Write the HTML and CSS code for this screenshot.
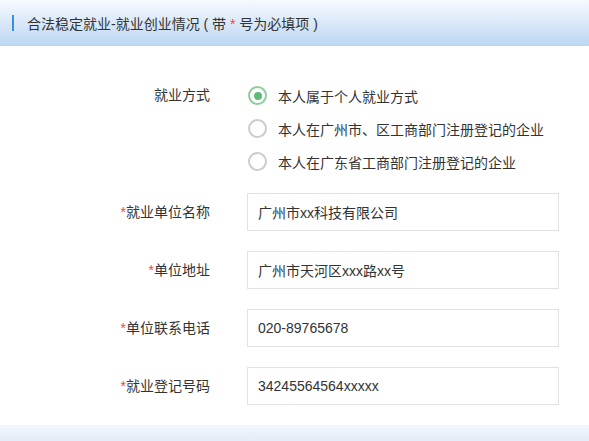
FILE: index.html
```html
<!DOCTYPE html>
<html lang="zh-CN">
<head>
<meta charset="utf-8">
<title>就业创业情况</title>
<link rel="stylesheet" href="styles.css">
</head>
<body>
<div class="panel">
  <div class="panel-head"><span class="bar"></span><span class="title">合法稳定就业-就业创业情况 ( 带 <span class="req">*</span> 号为必填项 )</span></div>
  <form class="form">
    <div class="row choice-row">
      <div class="label">就业方式</div>
      <div class="options">
        <label class="option"><span class="radio checked"></span>本人属于个人就业方式</label>
        <label class="option"><span class="radio"></span>本人在广州市、区工商部门注册登记的企业</label>
        <label class="option"><span class="radio"></span>本人在广东省工商部门注册登记的企业</label>
      </div>
    </div>
    <div class="row field">
      <div class="label"><span class="req">*</span>就业单位名称</div>
      <input class="input" type="text" value="广州市xx科技有限公司">
    </div>
    <div class="row field">
      <div class="label"><span class="req">*</span>单位地址</div>
      <input class="input" type="text" value="广州市天河区xxx路xx号">
    </div>
    <div class="row field">
      <div class="label"><span class="req">*</span>单位联系电话</div>
      <input class="input" type="text" value="020-89765678">
    </div>
    <div class="row field">
      <div class="label"><span class="req">*</span>就业登记号码</div>
      <input class="input" type="text" value="34245564564xxxxx">
    </div>
  </form>
  <div class="panel-foot"></div>
</div>
</body>
</html>
```
FILE: styles.css
```css
html, body {
  margin: 0;
  padding: 0;
  background: #ffffff;
}
body {
  font-family: "Liberation Sans", "Noto Sans CJK SC", sans-serif;
  font-size: 14px;
  color: #333333;
}
.panel {
  width: 589px;
}
.panel-head {
  height: 46px;
  display: flex;
  align-items: center;
  padding-left: 12px;
  background: linear-gradient(#f7fafe, #bcd6f3);
  box-sizing: border-box;
}
.bar {
  width: 2px;
  height: 16px;
  background: #3b8de0;
  margin-right: 13px;
  margin-top: -1px;
}
.title {
  font-size: 14px;
  color: #333;
  white-space: pre;
}
.req {
  color: #ff3b3b;
}
.form {
  display: flex;
  flex-direction: column;
  padding: 33px 0 20px;
  margin: 0;
}
.row {
  display: flex;
  align-items: center;
}
.choice-row {
  align-items: flex-start;
  margin-bottom: 15px;
}
.field + .field {
  margin-top: 20px;
}
.label {
  width: 210px;
  text-align: right;
  margin-right: 37px;
  line-height: 33px;
  flex-shrink: 0;
}
.options {
  display: flex;
  flex-direction: column;
}
.option {
  display: flex;
  align-items: center;
  height: 33px;
  cursor: pointer;
}
.radio {
  width: 15px;
  height: 15px;
  border: 2px solid #cccccc;
  border-radius: 50%;
  margin: 0 11px 0 1px;
  position: relative;
  flex-shrink: 0;
}
.radio.checked {
  border-color: #8ccf9a;
}
.radio.checked::after {
  content: "";
  position: absolute;
  left: 3.5px;
  top: 3.5px;
  width: 8px;
  height: 8px;
  border-radius: 50%;
  background: #5cbb78;
}
.input {
  width: 312px;
  height: 38px;
  box-sizing: border-box;
  border: 1px solid #e2e2e2;
  padding: 0 10px;
  font-family: "Liberation Sans", "Noto Sans CJK SC", sans-serif;
  font-size: 14px;
  color: #333;
  outline: none;
  background: #fff;
}
.panel-foot {
  height: 16px;
  background: linear-gradient(#f3f7fd, #e3ecf8);
}
```
